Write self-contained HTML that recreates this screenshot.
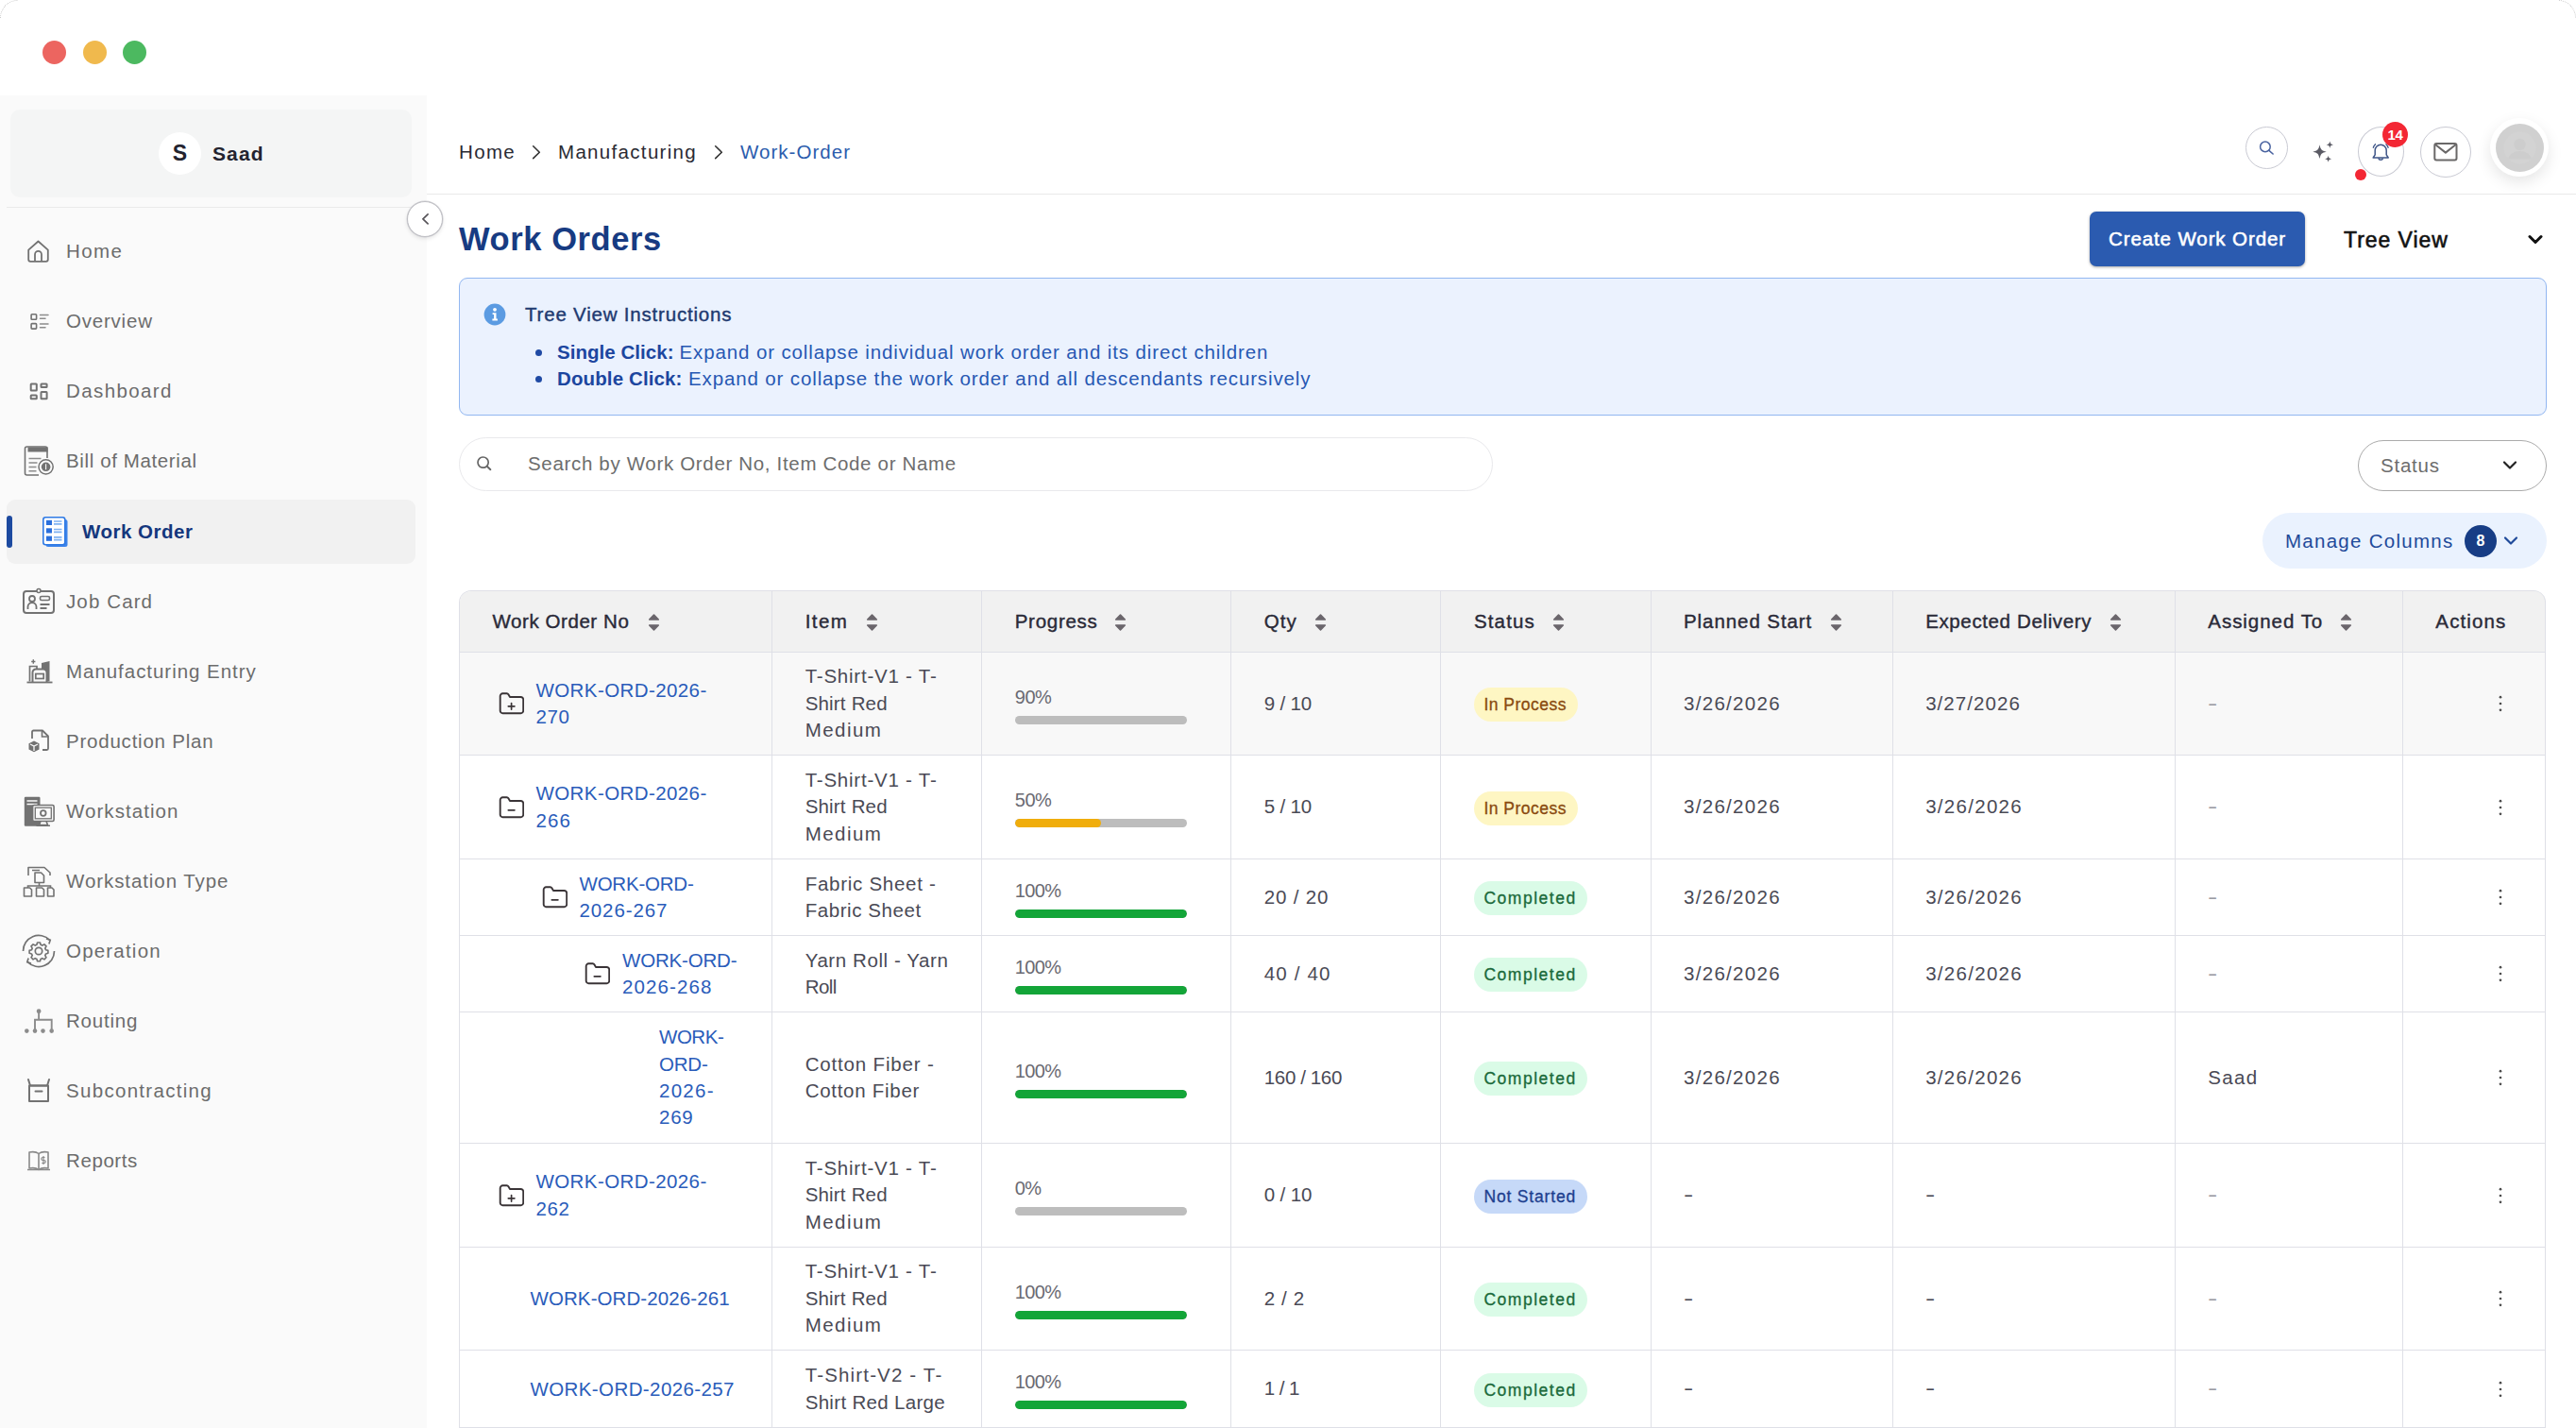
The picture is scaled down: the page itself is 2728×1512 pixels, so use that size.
<!DOCTYPE html>
<html lang="en">
<head>
<meta charset="utf-8">
<title>Work Orders</title>
<style>
*{box-sizing:border-box;margin:0;padding:0}
html,body{width:2728px;height:1512px;overflow:hidden;background:#fff}
body{position:relative;font-family:"Liberation Sans",sans-serif;color:#3f3f4a;-webkit-font-smoothing:antialiased}
.abs{position:absolute}
/* window chrome */
.dot{position:absolute;top:42.5px;width:25px;height:25px;border-radius:50%}
/* sidebar */
#sidebar{position:absolute;left:0;top:101px;width:452px;height:1411px;background:#fafafa}
#usercard{position:absolute;left:11px;top:15px;width:425px;height:93px;background:#f4f5f5;border-radius:10px}
#usercard .av{position:absolute;left:157px;top:24px;width:45px;height:45px;border-radius:50%;background:#fff;text-align:center;line-height:45px;font-weight:700;font-size:23px;color:#23232f}
#usercard .nm{position:absolute;left:214px;top:0;height:93px;line-height:93px;font-weight:700;font-size:21px;color:#23232f;white-space:nowrap}
#sdiv{position:absolute;left:7px;top:118px;width:429px;height:1px;background:#eaeaea}
.nav{position:absolute;left:0;width:452px;height:68px}
.nav .ic{position:absolute;left:21px;top:14px;width:40px;height:40px}
.nav .tx{position:absolute;left:70px;top:0;height:68px;line-height:68px;font-size:20.5px;color:#6c6c6c;white-space:nowrap}
.nav.on{left:7px;width:433px;background:#f1f1f1;border-radius:9px}
.nav.on:before{content:"";position:absolute;left:0;top:17px;width:6px;height:34px;border-radius:3px;background:#1d4aa0}
.nav.on .ic{left:31px}
.nav.on .tx{left:80px;font-weight:700;color:#14377d}
#collapse{position:absolute;left:431px;top:213px;width:38px;height:38px;border-radius:50%;background:#fff;border:1px solid #bfbfc4;box-shadow:0 0 0 .5px #cfcfd3,0 2px 4px rgba(0,0,0,.10)}
/* topbar */
#topline{position:absolute;left:452px;top:205px;width:2276px;height:1px;background:#e9e9e9}
.bc{position:absolute;top:141px;height:40px;line-height:40px;font-size:20.5px;color:#2a2a33;white-space:nowrap}
.circ{position:absolute;border-radius:50%;border:1px solid #c9cad3;background:#fff}
/* heading */
#h1{position:absolute;left:486px;top:227px;height:52px;line-height:52px;font-size:34.5px;font-weight:700;color:#173b82;white-space:nowrap}
#create{position:absolute;left:2213px;top:224px;width:228px;height:58px;border-radius:7px;background:#2b5bb0;color:#fff;font-weight:400;-webkit-text-stroke:.55px #fff;font-size:20.5px;line-height:58px;text-align:center;box-shadow:0 1px 3px rgba(0,0,0,.35)}
#treeview{position:absolute;left:2482px;top:225px;height:58px;line-height:58px;font-size:23px;font-weight:400;-webkit-text-stroke:.6px #111;color:#111;white-space:nowrap}
/* info */
#info{position:absolute;left:486px;top:294px;width:2211px;height:146px;border-radius:9px;background:#ebf2fe;border:1px solid #92b7f1}
#info .ttl{position:absolute;left:69px;top:22px;height:32px;line-height:32px;font-size:20.5px;color:#1e3a70;-webkit-text-stroke:.4px #1e3a70;white-space:nowrap}
#info .li{position:absolute;left:103px;height:28px;line-height:28px;font-size:20.5px;color:#2758b3;white-space:nowrap}
#info .li b{color:#1c469f;position:absolute;left:0;top:0}
#info .li span.r{position:absolute;top:0}
#info .bu{position:absolute;left:79.5px;width:7px;height:7px;border-radius:50%;background:#1f4aa4;margin-top:.5px}
/* search */
#search{position:absolute;left:486px;top:463px;width:1095px;height:57px;border-radius:29px;border:1px solid #e9e9ec;background:#fff}
#search .ph{position:absolute;left:72px;top:0;height:54px;line-height:54px;font-size:20.5px;color:#6d6d6d;white-space:nowrap}
#status{position:absolute;left:2497px;top:466px;width:200px;height:54px;border-radius:28px;border:1px solid #ababab;background:#fff}
#status .tx{position:absolute;left:23px;top:0;height:52px;line-height:52px;font-size:20.5px;color:#6d6d6d}
#manage{position:absolute;left:2396px;top:543px;width:301px;height:59px;border-radius:30px;background:#eaf2fe}
#manage .tx{position:absolute;left:24px;top:0;height:59px;line-height:59px;font-size:20.5px;color:#1f4a9a;white-space:nowrap}
#manage .bd{position:absolute;left:214px;top:13px;width:34px;height:34px;border-radius:50%;background:#173d85;color:#fff;font-weight:700;font-size:16px;line-height:34px;text-align:center}
/* table */
#tbl{position:absolute;left:486px;top:625px;width:2210px;border-collapse:separate;border-spacing:0;table-layout:fixed;border-left:1px solid #dfe0e7;border-top:1px solid #dfe0e7;border-radius:13px 13px 0 0}
#tbl th,#tbl td{border-right:1px solid #dfe0e7;border-bottom:1px solid #dfe0e7;padding:0 0 0 34.5px;text-align:left;vertical-align:middle;font-weight:400;white-space:nowrap;overflow:hidden}
#tbl th{height:65px;background:#f1f1f1;font-size:20.5px;color:#2a2a38;-webkit-text-stroke:.4px #2a2a38;padding-bottom:1px}
#tbl th:first-child{border-radius:12px 0 0 0}
#tbl th:last-child{border-radius:0 12px 0 0}
#tbl td{font-size:20.5px;line-height:28.4px;color:#4a4a55}
#tbl tr.hv td{background:#f8f8f8}
#tbl a{color:#2a5cba;text-decoration:none;display:inline-block;vertical-align:middle}
.srt{position:absolute;top:-10px;left:0}
.sw{display:inline-block;position:relative;width:0;height:0;vertical-align:middle}
.pill{display:inline-block;height:36px;line-height:37px;border-radius:18px;padding:0 0 0 10.5px;font-size:17.5px;font-weight:400;vertical-align:middle;position:relative;top:1px}
.pill.ip{background:#fef6c3;color:#8a4b10;-webkit-text-stroke:.32px #8a4b10;width:110px}
.pill.cp{background:#dafbe7;color:#1b6a3b;-webkit-text-stroke:.32px #1b6a3b;width:120px}
.pill.ns{background:#c6d9f8;color:#1e3f8f;-webkit-text-stroke:.32px #1e3f8f;width:120px}
.pg{display:block;width:182px;margin-left:0}
.pg .lb{display:block;font-size:20px;line-height:28px;color:#6a6a72}
.pg .br{display:block;width:182px;height:9px;border-radius:4.5px;background:#bdbdbd;margin-top:6px;overflow:hidden}
.pg .br i{display:block;height:9px;border-radius:4.5px}
.fold{display:inline-block;vertical-align:middle;margin-right:13px;position:relative;top:0}
.dash{display:inline-block;transform:scaleX(1.5);transform-origin:0 50%}
.dash.lt{color:#9b9ba3}
</style>
</head>
<body>
<!-- window controls -->
<div class="abs" style="left:0;top:0;width:60px;height:60px;border-top-left-radius:19px;border:1px dotted #c9c9c9;border-right:0;border-bottom:0;clip-path:polygon(0 0,19px 0,19px 19px,0 19px)"></div>
<div class="abs" style="left:2668px;top:0;width:60px;height:60px;border-top-right-radius:19px;border:1px dotted #c9c9c9;border-left:0;border-bottom:0;clip-path:polygon(41px 0,60px 0,60px 19px,41px 19px)"></div>
<div class="dot" style="left:45px;background:#ec6560"></div>
<div class="dot" style="left:87.5px;background:#f0b94d"></div>
<div class="dot" style="left:130px;background:#4cb960"></div>

<!-- SIDEBAR -->
<div id="sidebar">
  <div id="usercard"><div class="av">S</div><div class="nm"><span style="letter-spacing:1.1px">Saad</span></div></div>
  <div id="sdiv"></div>
  <div class="nav" style="top:131.0px"><svg class="ic" width="40" height="40" viewBox="0 0 40 40"><path d="M9.200 18.700L19.500 9.500l10.300 9.200v10.100a2 2 0 0 1-2 2H11.200a2 2 0 0 1-2-2z" fill="none" stroke="#727272" stroke-width="1.800" stroke-linejoin="round"/><path d="M16 30.800v-7.400a3.500 3.500 0 0 1 7 0v7.400" fill="none" stroke="#727272" stroke-width="1.800"/></svg><div class="tx"><span style="letter-spacing:1.37px">Home</span></div></div>
  <div class="nav" style="top:205.1px"><svg class="ic" width="40" height="40" viewBox="0 0 40 40"><rect x="12.100" y="12.800" width="5.500" height="5.500" rx=".8" fill="none" stroke="#727272" stroke-width="1.600"/><rect x="12.100" y="22.600" width="5.500" height="5.500" rx=".8" fill="none" stroke="#727272" stroke-width="1.600"/><path d="M21.500 13.500h8.500M21.500 17.200h5.500M21.500 23.100h8.500M21.500 26.800h5.500" stroke="#8c8c8c" stroke-width="1.500" stroke-linecap="round"/></svg><div class="tx"><span style="letter-spacing:0.79px">Overview</span></div></div>
  <div class="nav" style="top:279.2px"><svg class="ic" width="40" height="40" viewBox="0 0 40 40"><rect x="11.700" y="12.400" width="6.100" height="7.100" rx=".6" fill="none" stroke="#727272" stroke-width="2"/><rect x="22.500" y="12.400" width="6.100" height="3.700" rx=".6" fill="none" stroke="#727272" stroke-width="2"/><rect x="11.700" y="24.600" width="6.100" height="3.700" rx=".6" fill="none" stroke="#727272" stroke-width="2"/><rect x="22.500" y="21.100" width="6.100" height="7.200" rx=".6" fill="none" stroke="#727272" stroke-width="2"/></svg><div class="tx"><span style="letter-spacing:1.39px">Dashboard</span></div></div>
  <div class="nav" style="top:353.3px"><svg class="ic" width="40" height="40" viewBox="0 0 40 40"><path d="M29 17V7a2 2 0 0 0-2-2H7.500a2 2 0 0 0-2 2v26a2 2 0 0 0 2 2H20" fill="none" stroke="#727272" stroke-width="1.600" stroke-linejoin="round"/><rect x="8.500" y="5.500" width="21" height="5" fill="#727272"/><path d="M9.500 17.500h13M9.500 22h9M9.500 26.500h8M9.500 30.800h8" stroke="#8c8c8c" stroke-width="1.500"/><circle cx="27.600" cy="26.300" r="7.600" fill="#fafafa" stroke="#727272" stroke-width="1.500"/><circle cx="27.600" cy="26.300" r="4.800" fill="#727272"/><path d="M27.600 23.300v6" stroke="#fafafa" stroke-width="1.100"/></svg><div class="tx"><span style="letter-spacing:0.62px">Bill of Material</span></div></div>
  <div class="nav on" style="top:427.9px"><svg class="ic" width="40" height="40" viewBox="0 0 40 40"><rect x="10.500" y="7" width="23" height="29" rx="2.500" fill="#3d84ea"/><rect x="7.800" y="4.800" width="23" height="29" rx="2.500" fill="#fff" stroke="#2f7ae5" stroke-width="1.600"/><rect x="11" y="7.800" width="6" height="5.200" fill="#2a6fdc"/><rect x="11" y="16.300" width="6" height="5.200" fill="#2a6fdc"/><rect x="11" y="24.600" width="6" height="5.200" fill="#2a6fdc"/><path d="M19 9h8.500M19 11.800h8.500M19 17.500h8.500M19 20.300h8.500M19 25.800h8.500M19 28.600h8.500" stroke="#7fb2f2" stroke-width="1.700"/></svg><div class="tx"><span style="letter-spacing:0.5px">Work Order</span></div></div>
  <div class="nav" style="top:501.5px"><svg class="ic" width="40" height="40" viewBox="0 0 40 40"><rect x="4" y="9" width="32" height="23" rx="3" fill="none" stroke="#727272" stroke-width="2"/><circle cx="20" cy="8.5" r="2" fill="#fafafa" stroke="#727272" stroke-width="1.5"/><circle cx="13" cy="17" r="3" fill="none" stroke="#727272" stroke-width="1.8"/><path d="M8.5 28v-2.5a4.5 4.5 0 0 1 9 0V28" fill="none" stroke="#727272" stroke-width="1.8"/><rect x="21.5" y="14.5" width="10" height="4" rx="1.5" fill="none" stroke="#727272" stroke-width="1.6"/><path d="M21.5 23h10M21.5 27h7" stroke="#727272" stroke-width="1.8"/></svg><div class="tx"><span style="letter-spacing:1.12px">Job Card</span></div></div>
  <div class="nav" style="top:575.6px"><svg class="ic" width="40" height="40" viewBox="0 0 40 40"><path d="M23 30.500V11l8.500-2v21.500z" fill="#727272"/><path d="M10.500 30.500V14.500h7.500v3" fill="none" stroke="#727272" stroke-width="1.700"/><path d="M14.300 7.300v4.400M12.200 9.500h4.200" stroke="#727272" stroke-width="1.400"/><path d="M13.500 31V21a3.500 3.500 0 0 1 3.500-3.500h8a3.500 3.500 0 0 1 3.500 3.500v10" fill="#fafafa" stroke="#727272" stroke-width="2"/><rect x="16.800" y="22.500" width="8.400" height="5" fill="none" stroke="#727272" stroke-width="1.700"/><path d="M7.500 31.500h27" stroke="#727272" stroke-width="1.800"/></svg><div class="tx"><span style="letter-spacing:0.96px">Manufacturing Entry</span></div></div>
  <div class="nav" style="top:649.7px"><svg class="ic" width="40" height="40" viewBox="0 0 40 40"><path d="M13 17v-7a1.5 1.5 0 0 1 1.5-1.5H24l6 6v13a1.5 1.5 0 0 1-1.5 1.5H24" fill="none" stroke="#727272" stroke-width="1.8" stroke-linejoin="round"/><path d="M23.5 8.5v6.5H30" fill="none" stroke="#727272" stroke-width="1.6"/><path d="M15 19.5l5.5 2.8v6.2L15 31.3l-5.5-2.8v-6.2z" fill="#727272"/><path d="M15 25v5M11 23l4 2 4-2" stroke="#fafafa" stroke-width="1.3" fill="none"/></svg><div class="tx"><span style="letter-spacing:0.78px">Production Plan</span></div></div>
  <div class="nav" style="top:723.8px"><svg class="ic" width="40" height="40" viewBox="0 0 40 40"><rect x="4.800" y="4.700" width="16.700" height="31" rx="1.200" fill="#727272"/><path d="M7.500 9h11M7.500 12.500h11" stroke="#fafafa" stroke-width="1.400"/><rect x="13.600" y="13.500" width="22.500" height="17" rx="1.500" fill="#fafafa" stroke="#727272" stroke-width="1.600"/><rect x="16.300" y="16.200" width="17" height="11.600" fill="none" stroke="#727272" stroke-width="1.300"/><circle cx="24.800" cy="22" r="2.800" fill="none" stroke="#727272" stroke-width="1.800"/><path d="M22 30.500l-1.500 4h9l-1.500-4M17.500 35.200h14.500" stroke="#727272" stroke-width="1.600" fill="none"/></svg><div class="tx"><span style="letter-spacing:1.05px">Workstation</span></div></div>
  <div class="nav" style="top:797.9px"><svg class="ic" width="40" height="40" viewBox="0 0 40 40"><path d="M9 14V5.5h17l6 5.5v3" fill="none" stroke="#727272" stroke-width="1.6" stroke-linejoin="round"/><path d="M13 8.5h8" stroke="#727272" stroke-width="1.5"/><path d="M16 11h6.5l3 3v7.5H16z" fill="#fafafa" stroke="#727272" stroke-width="1.6" stroke-linejoin="round"/><path d="M20.5 21.5V25M8.5 28v-3h24v3" fill="none" stroke="#727272" stroke-width="1.6"/><path d="M4.5 27h6l2 2v7h-8zM17.5 27h6l2 2v7h-8zM29.5 27h4.5l2 2v7h-6.5z" fill="#fafafa" stroke="#727272" stroke-width="1.6" stroke-linejoin="round"/></svg><div class="tx"><span style="letter-spacing:0.92px">Workstation Type</span></div></div>
  <div class="nav" style="top:872.0px"><svg class="ic" width="40" height="40" viewBox="0 0 40 40"><path d="M36.500 20a16.500 16.500 0 0 1-28.200 11.700M3.500 20A16.500 16.500 0 0 1 31.700 8.300" fill="none" stroke="#727272" stroke-width="1.700"/><path d="M28 7l4.200 1.300-1.300 4.200M12 33l-4.200-1.300 1.300-4.200" fill="none" stroke="#727272" stroke-width="1.700"/><path d="M18.300 9.500h3.400l.7 2.700 2 .9 2.500-1.400 2.400 2.400-1.400 2.500.9 2 2.700.7v3.400l-2.700.7-.9 2 1.400 2.500-2.400 2.400-2.500-1.400-2 .9-.7 2.700h-3.400l-.7-2.700-2-.9-2.500 1.400-2.400-2.400 1.400-2.500-.9-2-2.700-.7v-3.400l2.700-.7.9-2-1.400-2.500 2.400-2.400 2.500 1.400 2-.9z" fill="none" stroke="#727272" stroke-width="1.900" stroke-linejoin="round" transform="translate(20 20) scale(.86) translate(-20 -20)"/><circle cx="20" cy="20" r="3.700" fill="none" stroke="#727272" stroke-width="1.700"/></svg><div class="tx"><span style="letter-spacing:1.2px">Operation</span></div></div>
  <div class="nav" style="top:946.1px"><svg class="ic" width="40" height="40" viewBox="0 0 40 40"><circle cx="20.100" cy="9.700" r="2.400" fill="#8c8c8c"/><path d="M20.100 11v7.800M16 29.500v-10.700h17.700v10.700" fill="none" stroke="#8c8c8c" stroke-width="1.900"/><circle cx="7.300" cy="30.600" r="2.300" fill="#8c8c8c"/><circle cx="16" cy="30.600" r="2.300" fill="#8c8c8c"/><circle cx="24.500" cy="30.600" r="2.300" fill="#8c8c8c"/><circle cx="33.700" cy="30.600" r="2.300" fill="#8c8c8c"/></svg><div class="tx"><span style="letter-spacing:0.77px">Routing</span></div></div>
  <div class="nav" style="top:1020.2px"><svg class="ic" width="40" height="40" viewBox="0 0 40 40"><path d="M9 8l2 6.500h18l2-6.500" fill="none" stroke="#727272" stroke-width="2" stroke-linecap="round" stroke-linejoin="round"/><path d="M10 14.500h20v16.500h-20z" fill="none" stroke="#727272" stroke-width="2" stroke-linejoin="round"/><path d="M16.500 20.500h7" stroke="#727272" stroke-width="2" stroke-linecap="round"/></svg><div class="tx"><span style="letter-spacing:1.3px">Subcontracting</span></div></div>
  <div class="nav" style="top:1094.3px"><svg class="ic" width="40" height="40" viewBox="0 0 40 40"><path d="M20 12.500c-2.500-2-6-2.200-10-1.500v17c4-.7 7.500-.500 10 1.500 2.500-2 6-2.200 10-1.500v-17c-4-.7-7.500-.500-10 1.500z" fill="none" stroke="#8a8a8a" stroke-width="1.600" stroke-linejoin="round"/><path d="M20 12.500v17M8 29.500h24" stroke="#8a8a8a" stroke-width="1.600"/><path d="M26.500 16.500h-2.200a1.500 1.500 0 0 0 0 3h1.400a1.500 1.500 0 0 1 0 3h-2.400M25 15v9" fill="none" stroke="#8a8a8a" stroke-width="1.200"/></svg><div class="tx"><span style="letter-spacing:0.59px">Reports</span></div></div>
</div>
<div id="collapse"><svg width="36" height="36" viewBox="0 0 36 36" style="display:block"><path d="M21.100 12.900L15.900 17.900l5.200 4.900" fill="none" stroke="#58555a" stroke-width="1.700" stroke-linecap="round" stroke-linejoin="round"/></svg></div>

<!-- TOPBAR -->
<div class="bc" style="left:486px"><span style="letter-spacing:1.34px">Home</span></div>
<svg class="abs" style="left:560px;top:151px" width="16" height="20" viewBox="0 0 16 20"><path d="M4.700 3.800l6.600 6.400-6.600 6.400" fill="none" stroke="#333" stroke-width="1.600" stroke-linecap="round" stroke-linejoin="round"/></svg>
<div class="bc" style="left:591px"><span style="letter-spacing:1.32px">Manufacturing</span></div>
<svg class="abs" style="left:753px;top:151px" width="16" height="20" viewBox="0 0 16 20"><path d="M4.700 3.800l6.600 6.400-6.600 6.400" fill="none" stroke="#333" stroke-width="1.600" stroke-linecap="round" stroke-linejoin="round"/></svg>
<div class="bc" style="left:784px;color:#2b5cad"><span style="letter-spacing:1.03px">Work-Order</span></div>
<div class="circ" style="left:2378px;top:134px;width:45px;height:45px"></div>
<svg class="abs" style="left:2389px;top:145px" width="22" height="22" viewBox="0 0 22 22"><circle cx="9.900" cy="10.400" r="5.300" fill="none" stroke="#4a63a0" stroke-width="1.500"/><path d="M13.900 14.400l4.200 3.600" stroke="#4a63a0" stroke-width="1.600" stroke-linecap="round"/></svg>
<svg class="abs" style="left:2446px;top:147px" width="28" height="28" viewBox="0 0 28 28"><path d="M10.500 6.300c1 5.200 2.200 6.400 7.200 7.400-5 1-6.200 2.200-7.200 7.400-1-5.200-2.200-6.400-7.200-7.400 5-1 6.200-2.200 7.200-7.400z" fill="#5a5a64"/><path d="M21.300 2.500c.5 2.600 1.100 3.200 3.700 3.700-2.600.5-3.200 1.100-3.700 3.700-.5-2.600-1.100-3.200-3.700-3.700 2.600-.5 3.200-1.100 3.700-3.700zM19.600 17.700c.5 2.500 1 3 3.500 3.500-2.500.5-3 1-3.500 3.500-.5-2.500-1-3-3.500-3.500 2.500-.5 3-1 3.500-3.500z" fill="#5a5a64"/></svg>
<div class="circ" style="left:2497px;top:134px;width:49px;height:53px"></div>
<svg class="abs" style="left:2507px;top:148px" width="28" height="28" viewBox="0 0 28 28"><path d="M14.200 5.200a6 6 0 0 0-6 6v4.600l-2 3.200h16l-2-3.200v-4.600a6 6 0 0 0-6-6z" fill="none" stroke="#3f5688" stroke-width="1.500" stroke-linejoin="round"/><path d="M11.800 19.500a2.500 2.500 0 0 0 4.800 0" fill="none" stroke="#3f5688" stroke-width="1.500"/><path d="M6.300 8.300a8 8 0 0 1 2.200-3.500M22.100 8.300a8 8 0 0 0-2.200-3.500" fill="none" stroke="#3f5688" stroke-width="1.300" stroke-linecap="round"/></svg>
<div class="abs" style="left:2523px;top:129px;width:27px;height:27px;border-radius:50%;background:#f32734;color:#fff;font-weight:700;font-size:15px;line-height:27px;text-align:center;letter-spacing:-.3px">14</div>
<div class="abs" style="left:2494px;top:179px;width:12px;height:12px;border-radius:50%;background:#f32734"></div>
<div class="circ" style="left:2563px;top:134px;width:54px;height:54px"></div>
<svg class="abs" style="left:2575px;top:148px" width="30" height="26" viewBox="0 0 30 26"><rect x="3.300" y="3.900" width="23.200" height="17.600" rx="2" fill="none" stroke="#6a6868" stroke-width="2"/><path d="M4 5l10.900 8.600L25.800 5" fill="none" stroke="#6a6868" stroke-width="2" stroke-linejoin="round"/></svg>
<div class="abs" style="left:2637px;top:125px;width:62px;height:62px;border-radius:50%;background:#fff;box-shadow:0 6px 16px rgba(0,0,0,.10)"></div>
<svg class="abs" style="left:2643px;top:131px" width="51" height="51" viewBox="0 0 51 51"><circle cx="25.500" cy="25.500" r="25.500" fill="#d0d0d0"/><circle cx="25.500" cy="25.500" r="17" fill="#d3d3d3"/><circle cx="25.500" cy="22" r="6.200" fill="#cdcdcd"/><path d="M13.500 37.500a12 8.500 0 0 1 24 0" fill="#cdcdcd"/></svg>
<div id="topline"></div>

<!-- HEADING -->
<div id="h1"><span style="letter-spacing:0.59px">Work Orders</span></div>
<div id="create"><span style="letter-spacing:0.89px">Create Work Order</span></div>
<div id="treeview"><span style="letter-spacing:0.94px">Tree View</span></div>
<svg class="abs" style="left:2675px;top:246px" width="20" height="16" viewBox="0 0 20 16"><path d="M4 4.5l6 6 6-6" fill="none" stroke="#111" stroke-width="3" stroke-linecap="round" stroke-linejoin="round"/></svg>

<!-- INFO -->
<div id="info">
  <svg class="abs" style="left:25px;top:26px" width="24" height="24" viewBox="0 0 24 24"><circle cx="12" cy="12" r="11.400" fill="#5b9be2"/><circle cx="12" cy="6.8" r="1.9" fill="#fff"/><path d="M9.6 10.2h3.9v6.4h1.4v1.9H9.4v-1.9h1.7v-4.5H9.6z" fill="#fff"/></svg>
  <div class="ttl"><span style="letter-spacing:0.8px">Tree View Instructions</span></div>
  <div class="bu" style="top:74px"></div>
  <div class="li" style="top:64px"><b><span style="letter-spacing:0.04px">Single Click:</span></b><span class="r" style="left:129.5px"><span style="letter-spacing:0.88px">Expand or collapse individual work order and its direct children</span></span></div>
  <div class="bu" style="top:102px"></div>
  <div class="li" style="top:92px"><b><span style="letter-spacing:0.12px">Double Click:</span></b><span class="r" style="left:139px"><span style="letter-spacing:0.87px">Expand or collapse the work order and all descendants recursively</span></span></div>
</div>

<!-- SEARCH / FILTERS -->
<div id="search">
  <svg class="abs" style="left:17px;top:18px" width="18" height="18" viewBox="0 0 18 18"><circle cx="7.6" cy="7.6" r="5.6" fill="none" stroke="#666" stroke-width="1.7"/><path d="M11.8 11.8l3.6 3.4" stroke="#666" stroke-width="1.9" stroke-linecap="round"/></svg>
  <div class="ph"><span style="letter-spacing:0.67px">Search by Work Order No, Item Code or Name</span></div>
</div>
<div id="status"><div class="tx"><span style="letter-spacing:0.78px">Status</span></div>
  <svg class="abs" style="left:151px;top:19px" width="18" height="14" viewBox="0 0 18 14"><path d="M3 3.5l6 6 6-6" fill="none" stroke="#222" stroke-width="2.2" stroke-linecap="round" stroke-linejoin="round"/></svg>
</div>
<div id="manage"><div class="tx"><span style="letter-spacing:1.27px">Manage Columns</span></div><div class="bd">8</div>
  <svg class="abs" style="left:254px;top:23px" width="18" height="14" viewBox="0 0 18 14"><path d="M3 3.5l6 6 6-6" fill="none" stroke="#1f4a9a" stroke-width="2.2" stroke-linecap="round" stroke-linejoin="round"/></svg>
</div>

<!-- TABLE -->
<table id="tbl">
<colgroup><col style="width:331px"><col style="width:222px"><col style="width:264px"><col style="width:222px"><col style="width:222px"><col style="width:256px"><col style="width:299px"><col style="width:241px"><col style="width:151px"></colgroup>
<thead><tr>
<th><span style="letter-spacing:0.57px">Work Order No</span><span class="sw"><svg class="srt" style="left:19.2px" width="13" height="20" viewBox="0 0 13 20"><path d="M6.500 2l4.800 5H1.700z" fill="#6b666c" stroke="#6b666c" stroke-width="1.600" stroke-linejoin="round"/><path d="M6.500 18l4.800-5H1.700z" fill="#6b666c" stroke="#6b666c" stroke-width="1.600" stroke-linejoin="round"/></svg></span></th>
<th><span style="letter-spacing:1.46px">Item</span><span class="sw"><svg class="srt" style="left:18.8px" width="13" height="20" viewBox="0 0 13 20"><path d="M6.500 2l4.800 5H1.700z" fill="#6b666c" stroke="#6b666c" stroke-width="1.600" stroke-linejoin="round"/><path d="M6.500 18l4.800-5H1.700z" fill="#6b666c" stroke="#6b666c" stroke-width="1.600" stroke-linejoin="round"/></svg></span></th>
<th><span style="letter-spacing:0.71px">Progress</span><span class="sw"><svg class="srt" style="left:17.9px" width="13" height="20" viewBox="0 0 13 20"><path d="M6.500 2l4.800 5H1.700z" fill="#6b666c" stroke="#6b666c" stroke-width="1.600" stroke-linejoin="round"/><path d="M6.500 18l4.800-5H1.700z" fill="#6b666c" stroke="#6b666c" stroke-width="1.600" stroke-linejoin="round"/></svg></span></th>
<th><span style="letter-spacing:1.05px">Qty</span><span class="sw"><svg class="srt" style="left:18.1px" width="13" height="20" viewBox="0 0 13 20"><path d="M6.500 2l4.800 5H1.700z" fill="#6b666c" stroke="#6b666c" stroke-width="1.600" stroke-linejoin="round"/><path d="M6.500 18l4.800-5H1.700z" fill="#6b666c" stroke="#6b666c" stroke-width="1.600" stroke-linejoin="round"/></svg></span></th>
<th><span style="letter-spacing:1.15px">Status</span><span class="sw"><svg class="srt" style="left:17.8px" width="13" height="20" viewBox="0 0 13 20"><path d="M6.500 2l4.800 5H1.700z" fill="#6b666c" stroke="#6b666c" stroke-width="1.600" stroke-linejoin="round"/><path d="M6.500 18l4.800-5H1.700z" fill="#6b666c" stroke="#6b666c" stroke-width="1.600" stroke-linejoin="round"/></svg></span></th>
<th><span style="letter-spacing:0.92px">Planned Start</span><span class="sw"><svg class="srt" style="left:18.3px" width="13" height="20" viewBox="0 0 13 20"><path d="M6.500 2l4.800 5H1.700z" fill="#6b666c" stroke="#6b666c" stroke-width="1.600" stroke-linejoin="round"/><path d="M6.500 18l4.800-5H1.700z" fill="#6b666c" stroke="#6b666c" stroke-width="1.600" stroke-linejoin="round"/></svg></span></th>
<th><span style="letter-spacing:0.63px">Expected Delivery</span><span class="sw"><svg class="srt" style="left:19.2px" width="13" height="20" viewBox="0 0 13 20"><path d="M6.500 2l4.800 5H1.700z" fill="#6b666c" stroke="#6b666c" stroke-width="1.600" stroke-linejoin="round"/><path d="M6.500 18l4.800-5H1.700z" fill="#6b666c" stroke="#6b666c" stroke-width="1.600" stroke-linejoin="round"/></svg></span></th>
<th><span style="letter-spacing:0.97px">Assigned To</span><span class="sw"><svg class="srt" style="left:17.9px" width="13" height="20" viewBox="0 0 13 20"><path d="M6.500 2l4.800 5H1.700z" fill="#6b666c" stroke="#6b666c" stroke-width="1.600" stroke-linejoin="round"/><path d="M6.500 18l4.800-5H1.700z" fill="#6b666c" stroke="#6b666c" stroke-width="1.600" stroke-linejoin="round"/></svg></span></th>
<th><span style="letter-spacing:1.11px">Actions</span></th>
</tr></thead><tbody>
<tr class="hv" style="height:109px">
<td><span style="display:inline-block;width:6px"></span><svg class="fold" width="27" height="24" viewBox="0 0 27 24"><path d="M1.700 19.500V4a2.700 2.700 0 0 1 2.700-2.700h4.300a2 2 0 0 1 1.700 1l1.600 2.700h11.500a2.700 2.700 0 0 1 2.700 2.700v11.800a2.700 2.700 0 0 1-2.700 2.700H4.400a2.700 2.700 0 0 1-2.700-2.700z" fill="none" stroke="#3a3437" stroke-width="1.900" stroke-linejoin="round"/><path d="M10.300 14.800h6.600M13.600 11.500v6.600" stroke="#3a3437" stroke-width="1.700" stroke-linecap="round"/></svg><a><span style="letter-spacing:0.41px">WORK-ORD-2026-</span><br><span style="letter-spacing:0.64px">270</span></a></td>
<td><span style="letter-spacing:0.77px">T-Shirt-V1 - T-</span><br><span style="letter-spacing:0.19px">Shirt Red</span><br><span style="letter-spacing:1.46px">Medium</span></td>
<td><span class="pg"><span class="lb"><span style="letter-spacing:-0.47px">90%</span></span><span class="br"></span></span></td>
<td><span style="letter-spacing:-0.2px">9 / 10</span></td>
<td><span class="pill ip"><span style="letter-spacing:0.48px">In Process</span></span></td>
<td><span style="letter-spacing:1.29px">3/26/2026</span></td>
<td><span style="letter-spacing:1.06px">3/27/2026</span></td>
<td><span class="dash lt">-</span></td>
<td style="padding-left:0"><svg style="display:block;margin-left:100.5px" width="6" height="20" viewBox="0 0 6 20"><circle cx="3" cy="3.200" r="1.350" fill="#4d4d4d"/><circle cx="3" cy="10" r="1.350" fill="#4d4d4d"/><circle cx="3" cy="16.800" r="1.350" fill="#4d4d4d"/></svg></td>
</tr>
<tr style="height:110px">
<td><span style="display:inline-block;width:6px"></span><svg class="fold" width="27" height="24" viewBox="0 0 27 24"><path d="M1.700 19.500V4a2.700 2.700 0 0 1 2.700-2.700h4.300a2 2 0 0 1 1.700 1l1.600 2.700h11.500a2.700 2.700 0 0 1 2.700 2.700v11.800a2.700 2.700 0 0 1-2.700 2.700H4.400a2.700 2.700 0 0 1-2.700-2.700z" fill="none" stroke="#3a3437" stroke-width="1.900" stroke-linejoin="round"/><path d="M10.300 14.800h6.600" stroke="#3a3437" stroke-width="1.700" stroke-linecap="round"/></svg><a><span style="letter-spacing:0.41px">WORK-ORD-2026-</span><br><span style="letter-spacing:1.14px">266</span></a></td>
<td><span style="letter-spacing:0.77px">T-Shirt-V1 - T-</span><br><span style="letter-spacing:0.19px">Shirt Red</span><br><span style="letter-spacing:1.46px">Medium</span></td>
<td><span class="pg"><span class="lb"><span style="letter-spacing:-0.47px">50%</span></span><span class="br"><i style="width:50%;background:#f0ad0c"></i></span></span></td>
<td><span style="letter-spacing:-0.2px">5 / 10</span></td>
<td><span class="pill ip"><span style="letter-spacing:0.48px">In Process</span></span></td>
<td><span style="letter-spacing:1.29px">3/26/2026</span></td>
<td><span style="letter-spacing:1.29px">3/26/2026</span></td>
<td><span class="dash lt">-</span></td>
<td style="padding-left:0"><svg style="display:block;margin-left:100.5px" width="6" height="20" viewBox="0 0 6 20"><circle cx="3" cy="3.200" r="1.350" fill="#4d4d4d"/><circle cx="3" cy="10" r="1.350" fill="#4d4d4d"/><circle cx="3" cy="16.800" r="1.350" fill="#4d4d4d"/></svg></td>
</tr>
<tr style="height:81px">
<td><span style="display:inline-block;width:52px"></span><svg class="fold" width="27" height="24" viewBox="0 0 27 24"><path d="M1.700 19.500V4a2.700 2.700 0 0 1 2.700-2.700h4.300a2 2 0 0 1 1.700 1l1.600 2.700h11.500a2.700 2.700 0 0 1 2.700 2.700v11.800a2.700 2.700 0 0 1-2.700 2.700H4.400a2.700 2.700 0 0 1-2.700-2.700z" fill="none" stroke="#3a3437" stroke-width="1.900" stroke-linejoin="round"/><path d="M10.300 14.800h6.600" stroke="#3a3437" stroke-width="1.700" stroke-linecap="round"/></svg><a><span style="letter-spacing:-0.22px">WORK-ORD-</span><br><span style="letter-spacing:0.91px">2026-267</span></a></td>
<td><span style="letter-spacing:0.73px">Fabric Sheet -</span><br><span style="letter-spacing:0.57px">Fabric Sheet</span></td>
<td><span class="pg"><span class="lb"><span style="letter-spacing:-0.6px">100%</span></span><span class="br"><i style="width:100%;background:#13a538"></i></span></span></td>
<td><span style="letter-spacing:0.8px">20 / 20</span></td>
<td><span class="pill cp"><span style="letter-spacing:1.51px">Completed</span></span></td>
<td><span style="letter-spacing:1.29px">3/26/2026</span></td>
<td><span style="letter-spacing:1.29px">3/26/2026</span></td>
<td><span class="dash lt">-</span></td>
<td style="padding-left:0"><svg style="display:block;margin-left:100.5px" width="6" height="20" viewBox="0 0 6 20"><circle cx="3" cy="3.200" r="1.350" fill="#4d4d4d"/><circle cx="3" cy="10" r="1.350" fill="#4d4d4d"/><circle cx="3" cy="16.800" r="1.350" fill="#4d4d4d"/></svg></td>
</tr>
<tr style="height:81px">
<td><span style="display:inline-block;width:97.5px"></span><svg class="fold" width="27" height="24" viewBox="0 0 27 24"><path d="M1.700 19.500V4a2.700 2.700 0 0 1 2.700-2.700h4.300a2 2 0 0 1 1.700 1l1.600 2.700h11.500a2.700 2.700 0 0 1 2.700 2.700v11.800a2.700 2.700 0 0 1-2.700 2.700H4.400a2.700 2.700 0 0 1-2.700-2.700z" fill="none" stroke="#3a3437" stroke-width="1.900" stroke-linejoin="round"/><path d="M10.300 14.800h6.600" stroke="#3a3437" stroke-width="1.700" stroke-linecap="round"/></svg><a><span style="letter-spacing:-0.19px">WORK-ORD-</span><br><span style="letter-spacing:1.12px">2026-268</span></a></td>
<td><span style="letter-spacing:0.59px">Yarn Roll - Yarn</span><br><span style="letter-spacing:-0.53px">Roll</span></td>
<td><span class="pg"><span class="lb"><span style="letter-spacing:-0.6px">100%</span></span><span class="br"><i style="width:100%;background:#13a538"></i></span></span></td>
<td><span style="letter-spacing:1.13px">40 / 40</span></td>
<td><span class="pill cp"><span style="letter-spacing:1.51px">Completed</span></span></td>
<td><span style="letter-spacing:1.29px">3/26/2026</span></td>
<td><span style="letter-spacing:1.29px">3/26/2026</span></td>
<td><span class="dash lt">-</span></td>
<td style="padding-left:0"><svg style="display:block;margin-left:100.5px" width="6" height="20" viewBox="0 0 6 20"><circle cx="3" cy="3.200" r="1.350" fill="#4d4d4d"/><circle cx="3" cy="10" r="1.350" fill="#4d4d4d"/><circle cx="3" cy="16.800" r="1.350" fill="#4d4d4d"/></svg></td>
</tr>
<tr style="height:139px">
<td><span style="display:inline-block;width:176.5px"></span><a><span style="letter-spacing:-0.46px">WORK-</span><br><span style="letter-spacing:-0.21px">ORD-</span><br><span style="letter-spacing:1.27px">2026-</span><br><span style="letter-spacing:0.77px">269</span></a></td>
<td><span style="letter-spacing:0.84px">Cotton Fiber -</span><br><span style="letter-spacing:0.72px">Cotton Fiber</span></td>
<td><span class="pg"><span class="lb"><span style="letter-spacing:-0.6px">100%</span></span><span class="br"><i style="width:100%;background:#13a538"></i></span></span></td>
<td><span style="letter-spacing:-0.38px">160 / 160</span></td>
<td><span class="pill cp"><span style="letter-spacing:1.51px">Completed</span></span></td>
<td><span style="letter-spacing:1.29px">3/26/2026</span></td>
<td><span style="letter-spacing:1.29px">3/26/2026</span></td>
<td><span style="letter-spacing:1.37px">Saad</span></td>
<td style="padding-left:0"><svg style="display:block;margin-left:100.5px" width="6" height="20" viewBox="0 0 6 20"><circle cx="3" cy="3.200" r="1.350" fill="#4d4d4d"/><circle cx="3" cy="10" r="1.350" fill="#4d4d4d"/><circle cx="3" cy="16.800" r="1.350" fill="#4d4d4d"/></svg></td>
</tr>
<tr style="height:110px">
<td><span style="display:inline-block;width:6px"></span><svg class="fold" width="27" height="24" viewBox="0 0 27 24"><path d="M1.700 19.500V4a2.700 2.700 0 0 1 2.700-2.700h4.300a2 2 0 0 1 1.700 1l1.600 2.700h11.500a2.700 2.700 0 0 1 2.700 2.700v11.800a2.700 2.700 0 0 1-2.700 2.700H4.400a2.700 2.700 0 0 1-2.700-2.700z" fill="none" stroke="#3a3437" stroke-width="1.900" stroke-linejoin="round"/><path d="M10.300 14.800h6.600M13.600 11.500v6.600" stroke="#3a3437" stroke-width="1.700" stroke-linecap="round"/></svg><a><span style="letter-spacing:0.41px">WORK-ORD-2026-</span><br><span style="letter-spacing:0.64px">262</span></a></td>
<td><span style="letter-spacing:0.77px">T-Shirt-V1 - T-</span><br><span style="letter-spacing:0.19px">Shirt Red</span><br><span style="letter-spacing:1.46px">Medium</span></td>
<td><span class="pg"><span class="lb"><span style="letter-spacing:-0.6px">0%</span></span><span class="br"></span></span></td>
<td><span style="letter-spacing:-0.16px">0 / 10</span></td>
<td><span class="pill ns"><span style="letter-spacing:0.83px">Not Started</span></span></td>
<td><span class="dash">-</span></td>
<td><span class="dash">-</span></td>
<td><span class="dash lt">-</span></td>
<td style="padding-left:0"><svg style="display:block;margin-left:100.5px" width="6" height="20" viewBox="0 0 6 20"><circle cx="3" cy="3.200" r="1.350" fill="#4d4d4d"/><circle cx="3" cy="10" r="1.350" fill="#4d4d4d"/><circle cx="3" cy="16.800" r="1.350" fill="#4d4d4d"/></svg></td>
</tr>
<tr style="height:109px">
<td><span style="display:inline-block;width:40px"></span><a><span style="letter-spacing:0.09px">WORK-ORD-2026-261</span></a></td>
<td><span style="letter-spacing:0.77px">T-Shirt-V1 - T-</span><br><span style="letter-spacing:0.19px">Shirt Red</span><br><span style="letter-spacing:1.46px">Medium</span></td>
<td><span class="pg"><span class="lb"><span style="letter-spacing:-0.6px">100%</span></span><span class="br"><i style="width:100%;background:#13a538"></i></span></span></td>
<td><span style="letter-spacing:0.59px">2 / 2</span></td>
<td><span class="pill cp"><span style="letter-spacing:1.51px">Completed</span></span></td>
<td><span class="dash">-</span></td>
<td><span class="dash">-</span></td>
<td><span class="dash lt">-</span></td>
<td style="padding-left:0"><svg style="display:block;margin-left:100.5px" width="6" height="20" viewBox="0 0 6 20"><circle cx="3" cy="3.200" r="1.350" fill="#4d4d4d"/><circle cx="3" cy="10" r="1.350" fill="#4d4d4d"/><circle cx="3" cy="16.800" r="1.350" fill="#4d4d4d"/></svg></td>
</tr>
<tr style="height:82px">
<td><span style="display:inline-block;width:40px"></span><a><span style="letter-spacing:0.4px">WORK-ORD-2026-257</span></a></td>
<td><span style="letter-spacing:1.16px">T-Shirt-V2 - T-</span><br><span style="letter-spacing:0.32px">Shirt Red Large</span></td>
<td><span class="pg"><span class="lb"><span style="letter-spacing:-0.6px">100%</span></span><span class="br"><i style="width:100%;background:#13a538"></i></span></span></td>
<td><span style="letter-spacing:-0.6px">1 / 1</span></td>
<td><span class="pill cp"><span style="letter-spacing:1.51px">Completed</span></span></td>
<td><span class="dash">-</span></td>
<td><span class="dash">-</span></td>
<td><span class="dash lt">-</span></td>
<td style="padding-left:0"><svg style="display:block;margin-left:100.5px" width="6" height="20" viewBox="0 0 6 20"><circle cx="3" cy="3.200" r="1.350" fill="#4d4d4d"/><circle cx="3" cy="10" r="1.350" fill="#4d4d4d"/><circle cx="3" cy="16.800" r="1.350" fill="#4d4d4d"/></svg></td>
</tr>
</tbody></table>
</body>
</html>
